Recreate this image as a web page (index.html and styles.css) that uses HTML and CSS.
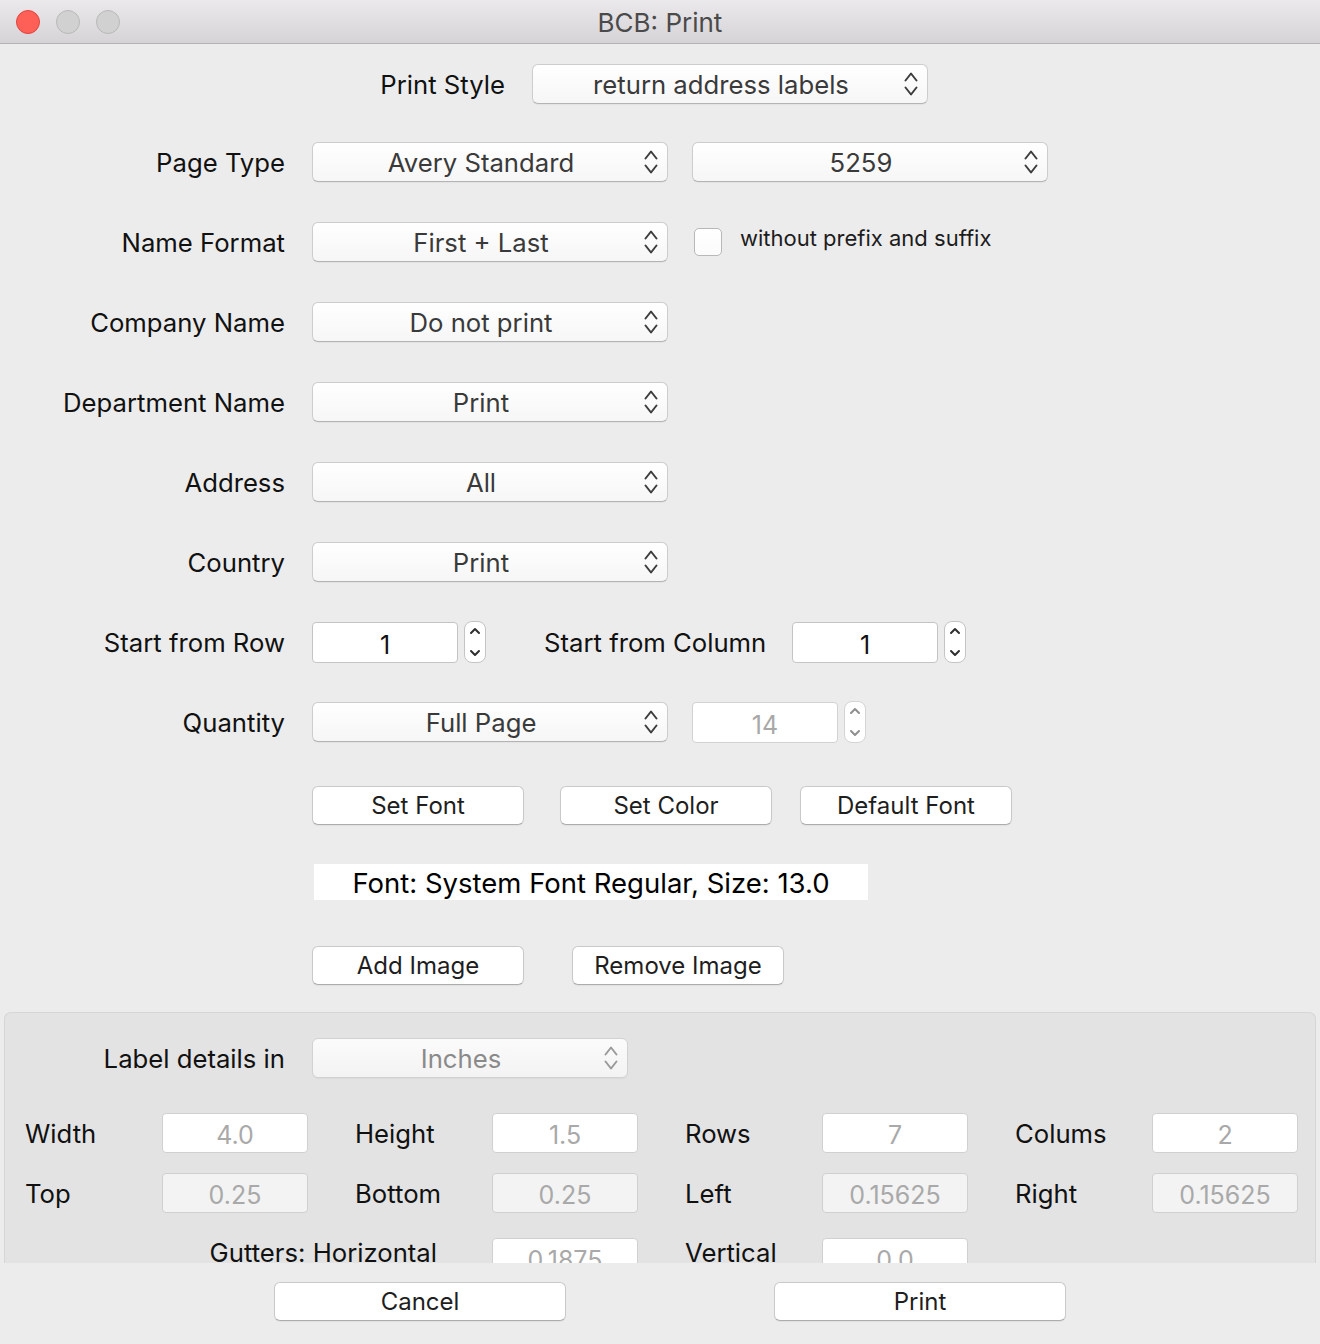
FILE: index.html
```html
<!DOCTYPE html>
<html>
<head>
<meta charset="utf-8">
<title>BCB: Print</title>
<link rel="stylesheet" href="styles.css">
</head>
<body>
<div class="window">
  <div class="titlebar">
    <div class="lights">
      <span class="light close"></span>
      <span class="light"></span>
      <span class="light"></span>
    </div>
    <div class="title">BCB: Print</div>
    <div></div>
  </div>

  <div class="main">
    <div class="row row-style">
      <div class="lbl">Print Style</div>
      <div class="popup w-style"><span class="ptext">return address labels</span><svg class="chev" viewBox="0 0 16 28" width="16" height="28"><path d="M2.5 10.5 L8 3.5 L13.5 10.5 M2.5 17.5 L8 24.5 L13.5 17.5"/></svg></div>
    </div>

    <div class="row r-page">
      <div class="lbl">Page Type</div>
      <div class="popup"><span class="ptext">Avery Standard</span><svg class="chev" viewBox="0 0 16 28" width="16" height="28"><path d="M2.5 10.5 L8 3.5 L13.5 10.5 M2.5 17.5 L8 24.5 L13.5 17.5"/></svg></div>
      <div class="popup second"><span class="ptext">5259</span><svg class="chev" viewBox="0 0 16 28" width="16" height="28"><path d="M2.5 10.5 L8 3.5 L13.5 10.5 M2.5 17.5 L8 24.5 L13.5 17.5"/></svg></div>
    </div>

    <div class="row r-next">
      <div class="lbl">Name Format</div>
      <div class="popup"><span class="ptext">First + Last</span><svg class="chev" viewBox="0 0 16 28" width="16" height="28"><path d="M2.5 10.5 L8 3.5 L13.5 10.5 M2.5 17.5 L8 24.5 L13.5 17.5"/></svg></div>
      <div class="check"></div>
      <div class="check-text">without prefix and suffix</div>
    </div>

    <div class="row r-next">
      <div class="lbl">Company Name</div>
      <div class="popup"><span class="ptext">Do not print</span><svg class="chev" viewBox="0 0 16 28" width="16" height="28"><path d="M2.5 10.5 L8 3.5 L13.5 10.5 M2.5 17.5 L8 24.5 L13.5 17.5"/></svg></div>
    </div>

    <div class="row r-next">
      <div class="lbl">Department Name</div>
      <div class="popup"><span class="ptext">Print</span><svg class="chev" viewBox="0 0 16 28" width="16" height="28"><path d="M2.5 10.5 L8 3.5 L13.5 10.5 M2.5 17.5 L8 24.5 L13.5 17.5"/></svg></div>
    </div>

    <div class="row r-next">
      <div class="lbl">Address</div>
      <div class="popup"><span class="ptext">All</span><svg class="chev" viewBox="0 0 16 28" width="16" height="28"><path d="M2.5 10.5 L8 3.5 L13.5 10.5 M2.5 17.5 L8 24.5 L13.5 17.5"/></svg></div>
    </div>

    <div class="row r-next">
      <div class="lbl">Country</div>
      <div class="popup"><span class="ptext">Print</span><svg class="chev" viewBox="0 0 16 28" width="16" height="28"><path d="M2.5 10.5 L8 3.5 L13.5 10.5 M2.5 17.5 L8 24.5 L13.5 17.5"/></svg></div>
    </div>

    <div class="row r-next">
      <div class="lbl">Start from Row</div>
      <div class="field">1</div>
      <div class="stepper"><svg viewBox="0 0 22 42" width="22" height="42"><path d="M7 12 L11 8 L15 12 M7 30 L11 34 L15 30"/></svg></div>
      <div class="lbl-inline">Start from Column</div>
      <div class="field">1</div>
      <div class="stepper"><svg viewBox="0 0 22 42" width="22" height="42"><path d="M7 12 L11 8 L15 12 M7 30 L11 34 L15 30"/></svg></div>
    </div>

    <div class="row r-next">
      <div class="lbl">Quantity</div>
      <div class="popup"><span class="ptext">Full Page</span><svg class="chev" viewBox="0 0 16 28" width="16" height="28"><path d="M2.5 10.5 L8 3.5 L13.5 10.5 M2.5 17.5 L8 24.5 L13.5 17.5"/></svg></div>
      <div class="field disabled qty">14</div>
      <div class="stepper disabled"><svg viewBox="0 0 22 42" width="22" height="42"><path d="M7 12 L11 8 L15 12 M7 30 L11 34 L15 30"/></svg></div>
    </div>

    <div class="btn-row r-fontbtns">
      <div class="btn">Set Font</div>
      <div class="btn gap36">Set Color</div>
      <div class="btn gap28">Default Font</div>
    </div>

    <div class="font-box">Font: System Font Regular, Size: 13.0</div>

    <div class="btn-row r-image">
      <div class="btn">Add Image</div>
      <div class="btn gap48">Remove Image</div>
    </div>

    <div class="details">
      <div class="row">
        <div class="lbl lbl-details">Label details in</div>
        <div class="popup popup-dis w-inch"><span class="ptext">Inches</span><svg class="chev" viewBox="0 0 16 28" width="16" height="28"><path d="M2.5 10.5 L8 3.5 L13.5 10.5 M2.5 17.5 L8 24.5 L13.5 17.5"/></svg></div>
      </div>
      <div class="dgrid">
        <div class="dl">Width</div><div class="df">4.0</div>
        <div class="dl sp">Height</div><div class="df">1.5</div>
        <div class="dl sp">Rows</div><div class="df">7</div>
        <div class="dl sp">Colums</div><div class="df">2</div>

        <div class="dl">Top</div><div class="df off">0.25</div>
        <div class="dl sp">Bottom</div><div class="df off">0.25</div>
        <div class="dl sp">Left</div><div class="df off">0.15625</div>
        <div class="dl sp">Right</div><div class="df off">0.15625</div>

        <div class="dl gut">Gutters: Horizontal</div><div class="df low">0.1875</div>
        <div class="dl sp low-l">Vertical</div><div class="df low">0.0</div>
      </div>
    </div>

    <div class="bottom">
      <div class="btn big">Cancel</div>
      <div class="btn big">Print</div>
    </div>
  </div>
</div>
</body>
</html>
```

FILE: styles.css
```css
html, body {
  margin: 0;
  padding: 0;
}
body {
  font-family: "Inter", "Roboto", "Liberation Sans", sans-serif;
  font-size: 25.7px;
  color: #111;
  background: #ececec;
}
.window {
  width: 1320px;
  height: 1344px;
  background: #ececec;
  display: flex;
  flex-direction: column;
  overflow: hidden;
}
.titlebar {
  height: 43px;
  border-bottom: 1px solid #b3b3b3;
  background: linear-gradient(#ebe9eb, #d5d3d5);
  display: grid;
  grid-template-columns: 1fr auto 1fr;
  align-items: center;
  flex: none;
}
.lights {
  display: flex;
  gap: 16px;
  padding-left: 16px;
}
.light {
  width: 24px;
  height: 24px;
  box-sizing: border-box;
  border-radius: 50%;
  background: #d1d1d1;
  border: 1px solid #b9b9b9;
}
.light.close {
  background: #fe5f57;
  border-color: #e0443e;
}
.title {
  color: #4a4a4a;
  font-size: 26px;
  padding-top: 2px;
}
.main {
  padding-top: 20px;
  display: flex;
  flex-direction: column;
}
.row {
  display: flex;
  align-items: center;
  height: 40px;
  flex: none;
}
.r-page { margin-top: 38px; }
.r-next { margin-top: 40px; }
.lbl {
  width: 285px;
  flex: none;
  text-align: right;
  margin-right: 27px;
  white-space: nowrap;
}
.row-style .lbl { width: 505px; }
.popup {
  width: 356px;
  height: 40px;
  box-sizing: border-box;
  flex: none;
  display: flex;
  align-items: center;
  border: 1px solid #cdcdcd;
  border-bottom-color: #b4b4b4;
  border-radius: 6px;
  background: linear-gradient(#ffffff, #f6f6f6);
  box-shadow: 0 1px 1px rgba(0,0,0,0.04);
  padding-right: 8px;
  color: #3a3a3a;
}
.w-style { width: 396px; }
.popup.second { margin-left: 24px; }
.ptext {
  flex: 1;
  text-align: center;
  padding-left: 6px;
  white-space: nowrap;
}
.chev {
  flex: none;
  display: block;
}
.chev path {
  fill: none;
  stroke: #3d3d3d;
  stroke-width: 2;
  stroke-linecap: round;
  stroke-linejoin: round;
}
.check {
  width: 28px;
  height: 28px;
  box-sizing: border-box;
  margin-left: 26px;
  border: 1px solid #b8b8b8;
  border-radius: 5px;
  background: linear-gradient(#fff, #fbfbfb);
  flex: none;
}
.check-text {
  margin-left: 18px;
  margin-bottom: 8px;
  color: #1c1c1c;
  font-size: 22px;
  white-space: nowrap;
}
.field {
  width: 146px;
  height: 41px;
  box-sizing: border-box;
  border: 1px solid #c4c4c4;
  border-radius: 4px;
  background: #fff;
  display: flex;
  align-items: center;
  justify-content: center;
  flex: none;
  padding-top: 5px;
  font-size: 25px;
}
.field.qty { margin-left: 24px; }
.field.disabled {
  color: #a8a8a8;
  border-color: #d2d2d2;
}
.stepper {
  width: 22px;
  height: 42px;
  box-sizing: border-box;
  margin-left: 6px;
  border: 1px solid #c4c4c4;
  border-radius: 8px;
  background: #fff;
  flex: none;
  overflow: hidden;
}
.stepper svg {
  display: block;
  margin: -1px 0 0 -1px;
}
.stepper path {
  fill: none;
  stroke: #2e2e2e;
  stroke-width: 2;
  stroke-linecap: round;
  stroke-linejoin: round;
}
.stepper.disabled { border-color: #d4d4d4; }
.stepper.disabled path { stroke: #8e8e8e; }
.lbl-inline {
  margin-left: 58px;
  margin-right: 27px;
  width: 221px;
  white-space: nowrap;
}
.btn-row {
  display: flex;
  padding-left: 312px;
  flex: none;
}
.r-fontbtns { margin-top: 44px; }
.r-image { margin-top: 46px; }
.btn {
  width: 212px;
  height: 39px;
  box-sizing: border-box;
  border: 1px solid #c9c9c9;
  border-bottom-color: #adadad;
  border-radius: 6px;
  background: #fff;
  box-shadow: 0 1px 1px rgba(0,0,0,0.05);
  display: flex;
  align-items: center;
  justify-content: center;
  color: #1e1e1e;
  font-size: 24px;
  flex: none;
}
.gap36 { margin-left: 36px; }
.gap28 { margin-left: 28px; }
.gap48 { margin-left: 48px; }
.font-box {
  margin-top: 39px;
  margin-left: 314px;
  width: 554px;
  height: 36px;
  background: #fff;
  display: flex;
  align-items: center;
  justify-content: center;
  font-size: 27.5px;
  color: #000;
  flex: none;
  padding-top: 2px;
  box-sizing: border-box;
}
.details {
  margin: 27px 4px 0 4px;
  height: 251px;
  box-sizing: border-box;
  border: 1px solid #d6d6d6;
  border-bottom: none;
  border-radius: 7px 7px 0 0;
  background: #e3e3e3;
  padding-top: 25px;
  overflow: hidden;
  flex: none;
}
.lbl-details { width: 280px; }
.popup-dis {
  color: #8a8a8a;
  background: linear-gradient(#fbfbfb, #f3f3f3);
  border-color: #d2d2d2;
}
.popup-dis .chev path { stroke: #9a9a9a; }
.w-inch { width: 316px; }
.dgrid {
  margin-top: 35px;
  padding-left: 20px;
  display: grid;
  grid-template-columns: 137px 146px 184px 146px 184px 146px 184px 146px;
  grid-auto-rows: 40px;
  row-gap: 20px;
  align-items: center;
}
.dl {
  white-space: nowrap;
}
.dl.sp { padding-left: 47px; }
.df {
  height: 40px;
  box-sizing: border-box;
  border: 1px solid #d0d0d0;
  border-radius: 4px;
  background: #fff;
  color: #a9a9a9;
  display: flex;
  align-items: center;
  justify-content: center;
  padding-top: 4px;
  font-size: 25px;
}
.df.off { background: #f3f3f3; }
.dl.gut {
  grid-column: 1 / 4;
  text-align: right;
  padding-right: 55px;
  margin-top: 5px;
  margin-bottom: 7px;
}
.dl.low-l {
  grid-column: 5;
  margin-top: 5px;
  margin-bottom: 7px;
}
.df.low { margin-top: 10px; }
.bottom {
  display: flex;
  padding-top: 19px;
  padding-left: 274px;
  gap: 208px;
}
.btn.big { width: 292px; }
```
